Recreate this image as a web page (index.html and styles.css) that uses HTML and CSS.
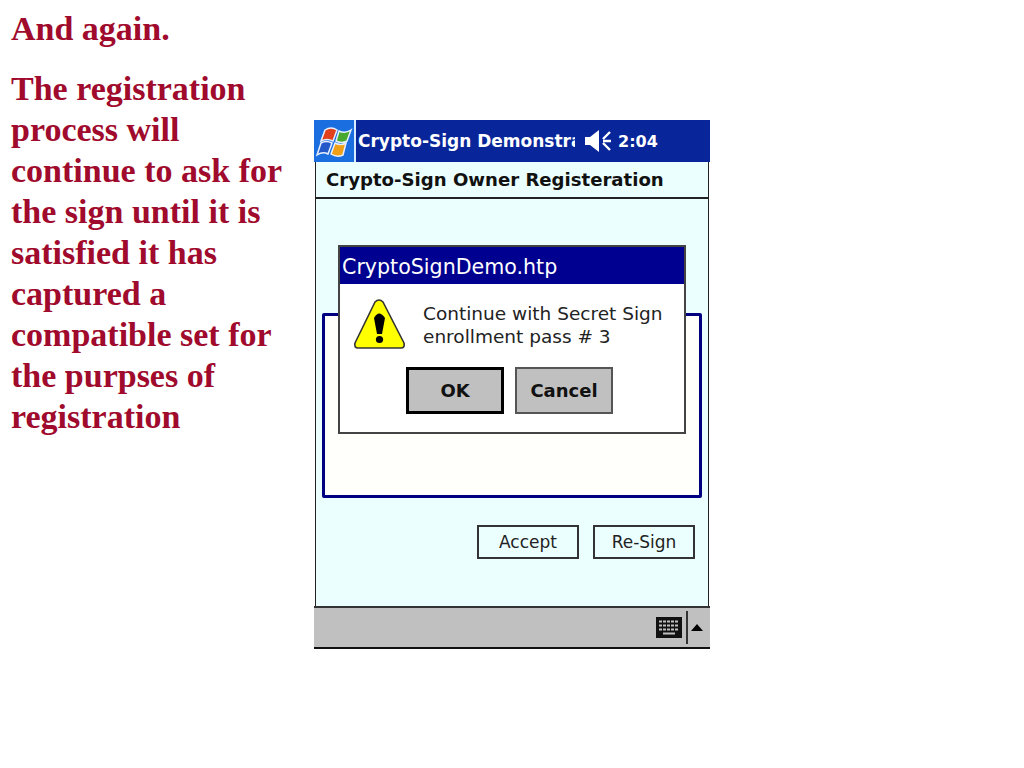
FILE: index.html
```html
<!DOCTYPE html>
<html>

<head>
    <title>And again</title>
    <link rel="stylesheet" href="styles.css">
</head>

<body>
    <div class="slide">
        <div class="notes">
            <p class="notes-title">And again.</p>
            <p class="notes-text">The registration process will continue to ask for the sign until it is satisfied it has captured a compatible set for the purpses of registration</p>
        </div>
        <div class="device">
            <div class="topbar">
                <div class="start">
                    <svg width="37" height="36" viewBox="0 0 37 36">
                        <path d="M9 7 Q15 3 21 7 L17 18 Q11 15 5 18 Z" fill="#e0401c" stroke="#e8f0ff" stroke-width="1.5"/>
                        <path d="M23 8 Q29 11 35 7 L31 18 Q26 21 20 18 Z" fill="#48a830" stroke="#e8f0ff" stroke-width="1.5"/>
                        <path d="M5 20 Q10 17 16 20 L12 31 Q7 28 1 32 Z" fill="#2458c8" stroke="#e8f0ff" stroke-width="1.5"/>
                        <path d="M19 20 Q25 23 30 20 L27 32 Q21 35 15 31 Z" fill="#f0a018" stroke="#e8f0ff" stroke-width="1.5"/>
                    </svg>
                </div>
                <div class="apptitle">Crypto-Sign Demonstration</div>
                <svg class="speaker" width="27" height="22" viewBox="0 0 27 22">
                    <path d="M0 7 H5 L14 0 V22 L5 15 H0 Z" fill="#fff"/>
                    <path d="M25 2 L18 9 M18 11 H26 M18 13 L25 20" stroke="#fff" stroke-width="2.4" fill="none"/>
                </svg>
                <div class="clock">2:04</div>
            </div>
            <div class="heading">Crypto-Sign Owner Registeration</div>
            <div class="content">
                <div class="panel"></div>
                <div class="actions">
                    <button class="btn">Accept</button>
                    <button class="btn">Re-Sign</button>
                </div>
            </div>
            <div class="taskbar">
                <svg class="keyboard" width="26" height="21" viewBox="0 0 26 21">
                    <rect width="26" height="21" fill="#111"/>
                    <path d="M3 4.5 H23 M3 8.5 H23 M3 12.5 H23" stroke="#c0c0c0" stroke-width="2" stroke-dasharray="3 1" fill="none"/>
                    <path d="M7 16.5 H19" stroke="#c0c0c0" stroke-width="2"/>
                </svg>
                <div class="divider"></div>
                <div class="arrow"></div>
            </div>

            <div class="dialog">
                <div class="dialog-title">CryptoSignDemo.htp</div>
                <div class="dialog-body">
                    <svg class="warning" width="52" height="52" viewBox="0 0 52 52">
                        <path d="M21 4 Q25 0 29 4 L50 45 Q51 50 47 50 H4 Q0 50 1 45 Z" fill="#ffff00" stroke="#333" stroke-width="1.6" stroke-linejoin="round"/>
                        <path d="M20 20 Q25 11 31 20 L28 36 H23 Z" fill="#000"/>
                        <circle cx="25.5" cy="41.5" r="3.6" fill="#000"/>
                    </svg>
                    <div class="dialog-text">Continue with Secret Sign<br>enrollment pass # 3</div>
                </div>
                <div class="dialog-actions">
                    <button class="dlg-btn dlg-default">OK</button>
                    <button class="dlg-btn">Cancel</button>
                </div>
            </div>
        </div>
    </div>
</body>

</html>
```

FILE: styles.css
```css
body {
    margin: 0;
    background-color: #fff;
}

.slide {
    display: flex;
    align-items: flex-start;
}

.notes {
    width: 285px;
    padding-left: 11px;
    box-sizing: border-box;
    margin-right: 29px;
    font-family: "Liberation Serif", serif;
    font-weight: bold;
    font-size: 34px;
    line-height: 41px;
    color: #a00a2c;
}

.notes p {
    margin: 0;
}

.notes-title {
    margin-top: 8px !important;
    margin-bottom: 19px !important;
}

.device {
    position: relative;
    width: 396px;
    height: 529px;
    margin-top: 120px;
    display: flex;
    flex-direction: column;
    font-family: "DejaVu Sans", sans-serif;
    color: #111;
}

.topbar {
    height: 42px;
    background-color: #08269a;
    display: flex;
    align-items: center;
    color: #fff;
    font-weight: bold;
    font-size: 17px;
}

.start {
    width: 42px;
    height: 42px;
    flex: none;
    background-color: #1a6ee0;
    border-right: 2px solid #d8ecff;
    box-sizing: border-box;
    display: flex;
    align-items: center;
    padding-left: 2px;
}

.apptitle {
    width: 217px;
    margin-left: 2px;
    white-space: nowrap;
    overflow: hidden;
}

.speaker {
    margin-left: 10px;
}

.clock {
    margin-left: 6px;
    font-size: 16px;
}

.heading {
    height: 35px;
    line-height: 35px;
    padding-left: 10px;
    font-weight: bold;
    font-size: 18.1px;
    background-color: #ebffff;
    margin: 0 1px;
    border-left: 1px solid #222;
    border-right: 1px solid #222;
    box-shadow: 0 2px 0 #222;
    margin-bottom: 2px;
}

.content {
    flex: 1;
    background-color: #ebffff;
    margin: 0 1px;
    border-left: 1px solid #222;
    border-right: 1px solid #222;
    padding: 114px 6px 0 6px;
}

.panel {
    height: 185px;
    box-sizing: border-box;
    border: 3px solid #000080;
    border-radius: 2px;
    background-color: #fffffc;
}

.actions {
    display: flex;
    justify-content: flex-end;
    gap: 14px;
    margin-top: 27px;
    padding-right: 7px;
}

.btn {
    width: 102px;
    height: 34px;
    border: 2px solid #333;
    background-color: #ebffff;
    font-family: "DejaVu Sans", sans-serif;
    font-size: 17px;
    color: #222;
    padding: 0;
}

.taskbar {
    height: 43px;
    box-sizing: border-box;
    background-color: #c0c0c0;
    border-top: 2px solid #333;
    border-bottom: 2px solid #111;
    display: flex;
    align-items: center;
    justify-content: flex-end;
}

.keyboard {
    margin-right: 4px;
}

.divider {
    width: 2px;
    height: 33px;
    background-color: #333;
    margin-right: 3px;
}

.arrow {
    width: 0;
    height: 0;
    border-left: 6px solid transparent;
    border-right: 6px solid transparent;
    border-bottom: 7px solid #000;
    margin-right: 7px;
}

.dialog {
    position: absolute;
    left: 24px;
    top: 125px;
    width: 348px;
    height: 189px;
    box-sizing: border-box;
    border: 2px solid #444;
    background-color: #fff;
}

.dialog-title {
    height: 37px;
    line-height: 40px;
    padding-left: 2px;
    background-color: #000090;
    color: #fff;
    font-size: 20.6px;
}

.dialog-body {
    display: flex;
    height: 83px;
    padding: 14px 0 0 14px;
    box-sizing: border-box;
}

.warning {
    flex: none;
}

.dialog-text {
    margin-left: 17px;
    padding-top: 4px;
    font-size: 18.5px;
    line-height: 23px;
    color: #222;
    white-space: nowrap;
}

.dialog-actions {
    display: flex;
    gap: 11px;
    padding-left: 66px;
}

.dlg-btn {
    width: 98px;
    height: 47px;
    border: 2px solid #555;
    background-color: #c0c0c0;
    font-family: "DejaVu Sans", sans-serif;
    font-weight: bold;
    font-size: 18px;
    color: #111;
    padding: 0;
}

.dlg-default {
    border: 3px solid #000;
}
```
